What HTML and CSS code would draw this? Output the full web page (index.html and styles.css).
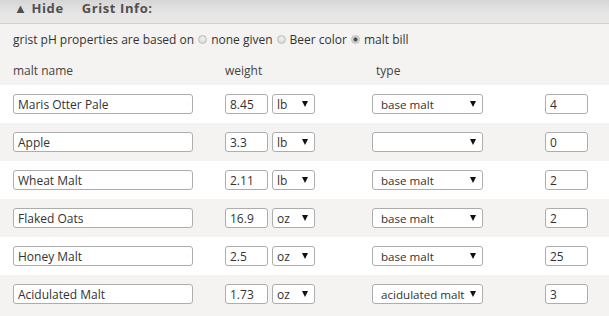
FILE: index.html
```html
<!DOCTYPE html>
<html>
<head>
<meta charset="utf-8">
<link rel="stylesheet" href="styles.css">
</head>
<body>
<div class="bar">
  <span class="toggle">▲ Hide</span>
  <span class="title">Grist Info:</span>
</div>
<div class="ph"><span>grist pH properties are based on</span><label class="opt"><input type="radio" name="ph" class="radio">none given</label><label class="opt"><input type="radio" name="ph" class="radio">Beer color</label><label class="opt"><input type="radio" name="ph" class="radio" checked>malt bill</label></div>
<div class="table">
  <div class="row head">
    <div class="c1">malt name</div>
    <div class="c2">weight</div>
    <div class="c3 typehead">type</div>
    <div class="c4"></div>
  </div>

  <div class="row odd">
    <div class="c1"><input class="field name" value="Maris Otter Pale"></div>
    <div class="c2"><input class="field num" value="8.45"><span class="sel unit"><select><option>lb</option><option>oz</option></select></span></div>
    <div class="c3"><span class="sel type"><select><option>base malt</option></select></span></div>
    <div class="c4"><input class="field num" value="4"></div>
  </div>

  <div class="row even">
    <div class="c1"><input class="field name" value="Apple"></div>
    <div class="c2"><input class="field num" value="3.3"><span class="sel unit"><select><option>lb</option><option>oz</option></select></span></div>
    <div class="c3"><span class="sel type"><select><option></option></select></span></div>
    <div class="c4"><input class="field num" value="0"></div>
  </div>

  <div class="row odd">
    <div class="c1"><input class="field name" value="Wheat Malt"></div>
    <div class="c2"><input class="field num" value="2.11"><span class="sel unit"><select><option>lb</option><option>oz</option></select></span></div>
    <div class="c3"><span class="sel type"><select><option>base malt</option></select></span></div>
    <div class="c4"><input class="field num" value="2"></div>
  </div>

  <div class="row even">
    <div class="c1"><input class="field name" value="Flaked Oats"></div>
    <div class="c2"><input class="field num" value="16.9"><span class="sel unit"><select><option>oz</option><option>lb</option></select></span></div>
    <div class="c3"><span class="sel type"><select><option>base malt</option></select></span></div>
    <div class="c4"><input class="field num" value="2"></div>
  </div>

  <div class="row odd">
    <div class="c1"><input class="field name" value="Honey Malt"></div>
    <div class="c2"><input class="field num" value="2.5"><span class="sel unit"><select><option>oz</option><option>lb</option></select></span></div>
    <div class="c3"><span class="sel type"><select><option>base malt</option></select></span></div>
    <div class="c4"><input class="field num" value="25"></div>
  </div>

  <div class="row even">
    <div class="c1"><input class="field name" value="Acidulated Malt"></div>
    <div class="c2"><input class="field num" value="1.73"><span class="sel unit"><select><option>oz</option><option>lb</option></select></span></div>
    <div class="c3"><span class="sel type"><select><option>acidulated malt</option></select></span></div>
    <div class="c4"><input class="field num" value="3"></div>
  </div>
</div>
</body>
</html>
```
FILE: styles.css
```css
html, body {
  margin: 0;
  padding: 0;
}
body {
  background: #f4f3f1;
  font-family: "Open Sans", "Liberation Sans", sans-serif;
  font-size: 12px;
  color: #333;
  width: 609px;
  overflow: hidden;
}
.bar {
  height: 24px;
  box-sizing: border-box;
  border-bottom: 1px solid #cfcfcf;
  background: linear-gradient(#d6d6d6, #e6e6e6 60%, #e8e8e8);
  display: flex;
  align-items: flex-start;
  gap: 18px;
  padding-left: 14px;
  padding-top: 1px;
  font-weight: bold;
  font-size: 13px;
  line-height: 14px;
  color: #505050;
  letter-spacing: 0.6px;
}
.ph {
  height: 31px;
  padding-left: 13px;
  display: flex;
  align-items: center;
  color: #333;
}
.opt {
  display: inline-flex;
  align-items: center;
}
.radio {
  appearance: none;
  -webkit-appearance: none;
  width: 9px;
  height: 9px;
  margin: 0 4px 0 4px;
  border-radius: 50%;
  border: 1px solid #bdbdbd;
  background: radial-gradient(circle at 50% 40%, #f2f2f2, #d2d2d2);
  box-sizing: border-box;
}
.radio:checked {
  background: radial-gradient(circle, #4a4a4a 0, #555 1.7px, #d8d8d8 2.5px, #e4e4e4 100%);
}
.table {
  display: flex;
  flex-direction: column;
}
.row {
  height: 38px;
  display: grid;
  grid-template-columns: 212px 147px 173px 1fr;
  align-items: center;
  justify-items: start;
  padding-left: 13px;
}
.row.head {
  height: 30px;
  color: #444;
}
.typehead {
  padding-left: 4px;
}
.row.odd {
  background: #fff;
}
.row.even {
  background: #f4f3f1;
}
.c2 {
  display: flex;
  gap: 4px;
  align-items: center;
}
.field {
  height: 20px;
  box-sizing: border-box;
  border: 1px solid #adadad;
  border-radius: 3px;
  background: #fff;
  font-family: "Open Sans", "Liberation Sans", sans-serif;
  font-size: 12px;
  color: #333;
  padding: 0 4px;
  margin: 0;
  display: block;
  outline: none;
}
.field.name {
  width: 180px;
}
.field.num {
  width: 43px;
}
.sel {
  position: relative;
  display: inline-block;
}
.sel select {
  appearance: none;
  -webkit-appearance: none;
  height: 20px;
  box-sizing: border-box;
  border: 1px solid #adadad;
  border-radius: 3px;
  background: #fff;
  font-family: "Open Sans", "Liberation Sans", sans-serif;
  font-size: 12px;
  color: #333;
  padding: 0 0 0 4px;
  margin: 0;
  display: block;
  outline: none;
}
.sel.unit select {
  width: 43px;
}
.sel.type select {
  width: 111px;
  padding-left: 8px;
  font-size: 11.6px;
}
.sel::after {
  content: "";
  position: absolute;
  top: 7px;
  right: 7px;
  width: 0;
  height: 0;
  border-left: 3px solid transparent;
  border-right: 3px solid transparent;
  border-top: 6px solid #111;
  pointer-events: none;
}
```
